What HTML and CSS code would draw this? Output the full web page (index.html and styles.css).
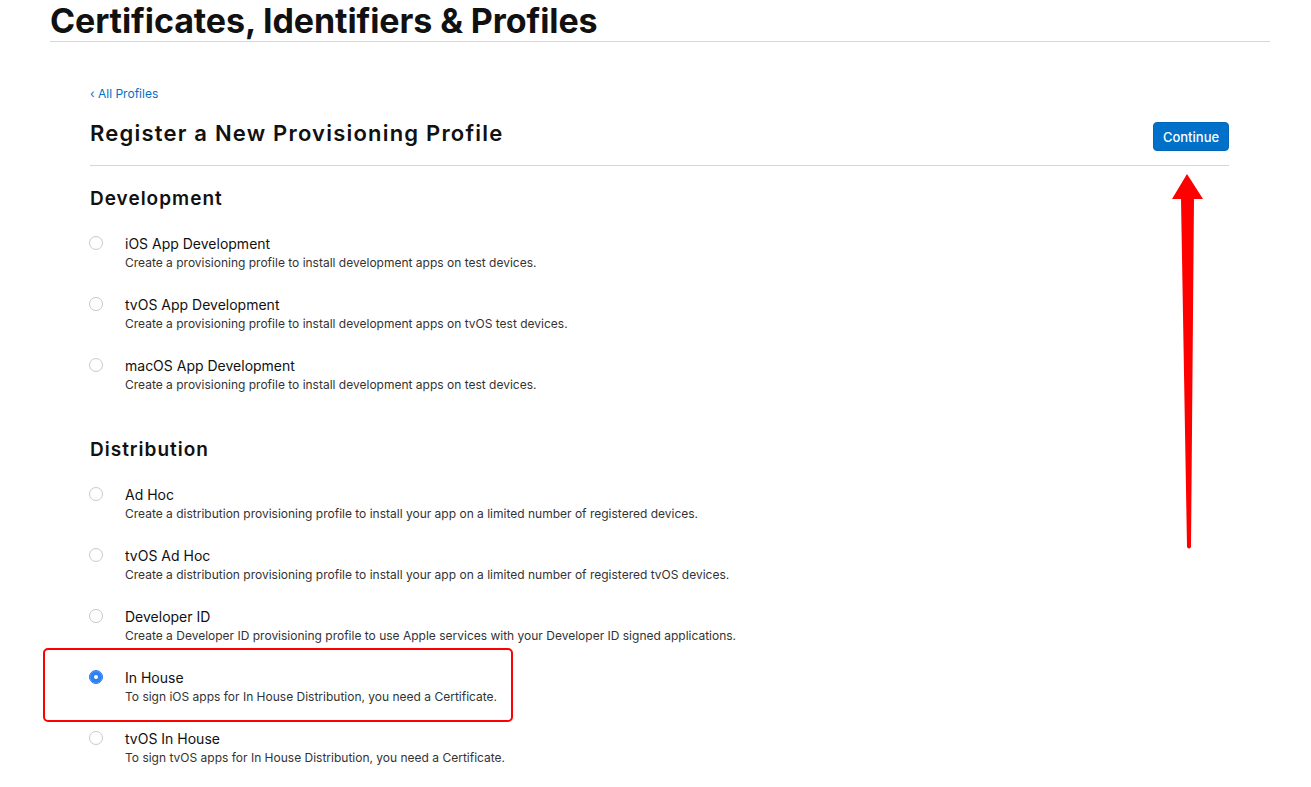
FILE: index.html
```html
<!DOCTYPE html>
<html lang="en">
<head>
    <meta charset="UTF-8">
    <title>Register a New Provisioning Profile</title>
    <link rel="stylesheet" href="styles.css">
</head>
<body>

    <!-- Page header -->
    <header class="page-header">
        <h1>Certificates, Identifiers &amp; Profiles</h1>
    </header>

    <main class="content">
        <a class="back-link" href="#">&lsaquo; All Profiles</a>

        <div class="title-row">
            <h2>Register a New Provisioning Profile</h2>
            <button class="btn-continue">Continue</button>
        </div>

        <!-- Development -->
        <section class="group">
            <h3>Development</h3>
            <div class="option">
                <span class="radio"></span>
                <div class="option-text">
                    <div class="option-title">iOS App Development</div>
                    <div class="option-desc">Create a provisioning profile to install development apps on test devices.</div>
                </div>
            </div>
            <div class="option">
                <span class="radio"></span>
                <div class="option-text">
                    <div class="option-title">tvOS App Development</div>
                    <div class="option-desc">Create a provisioning profile to install development apps on tvOS test devices.</div>
                </div>
            </div>
            <div class="option">
                <span class="radio"></span>
                <div class="option-text">
                    <div class="option-title">macOS App Development</div>
                    <div class="option-desc">Create a provisioning profile to install development apps on test devices.</div>
                </div>
            </div>
        </section>

        <!-- Distribution -->
        <section class="group group-dist">
            <h3>Distribution</h3>
            <div class="option">
                <span class="radio"></span>
                <div class="option-text">
                    <div class="option-title">Ad Hoc</div>
                    <div class="option-desc">Create a distribution provisioning profile to install your app on a limited number of registered devices.</div>
                </div>
            </div>
            <div class="option">
                <span class="radio"></span>
                <div class="option-text">
                    <div class="option-title">tvOS Ad Hoc</div>
                    <div class="option-desc">Create a distribution provisioning profile to install your app on a limited number of registered tvOS devices.</div>
                </div>
            </div>
            <div class="option">
                <span class="radio"></span>
                <div class="option-text">
                    <div class="option-title">Developer ID</div>
                    <div class="option-desc">Create a Developer ID provisioning profile to use Apple services with your Developer ID signed applications.</div>
                </div>
            </div>
            <div class="option option-marked">
                <span class="radio checked"></span>
                <div class="option-text">
                    <div class="option-title">In House</div>
                    <div class="option-desc">To sign iOS apps for In House Distribution, you need a Certificate.</div>
                </div>
                <!-- annotation box -->
                <span class="highlight"></span>
            </div>
            <div class="option">
                <span class="radio"></span>
                <div class="option-text">
                    <div class="option-title">tvOS In House</div>
                    <div class="option-desc">To sign tvOS apps for In House Distribution, you need a Certificate.</div>
                </div>
            </div>
        </section>
    </main>

    <!-- annotation arrow -->
    <svg class="arrow" width="40" height="382" viewBox="0 0 40 382">
        <path d="M19 4 L35 29 L26 29 L23 377 Q21 380 19 377 L13 29 L4 29 Z" fill="#ff0000"/>
    </svg>

</body>
</html>
```

FILE: styles.css
```css
body, html {
    margin: 0;
    padding: 0;
    background: #fff;
    color: #1d1d1f;
    font-family: Inter, "Noto Sans", sans-serif;
}
/* Header */
.page-header {
    margin: 0 41px 0 50px;
    border-bottom: 1px solid #d6d6d6;
}
.page-header h1 {
    margin: 0;
    font-size: 34px;
    line-height: 41px;
    font-weight: 700;
    letter-spacing: -0.1px;
    color: #111;
}
/* Main column */
.content {
    margin: 0 82px 0 90px;
    padding-top: 43px;
}
.back-link {
    display: block;
    font-size: 12px;
    line-height: 18px;
    color: #0070c9;
    text-decoration: none;
}
.title-row {
    display: flex;
    justify-content: space-between;
    align-items: flex-start;
    margin-top: 16px;
    padding-bottom: 14px;
    border-bottom: 1px solid #d6d6d6;
}
.title-row h2 {
    margin: 0;
    font-size: 22px;
    line-height: 28px;
    font-weight: 600;
    letter-spacing: 1.2px;
    color: #111;
}
.btn-continue {
    margin-top: 3px;
    height: 29px;
    width: 76px;
    padding: 0;
    background-color: #0070c9;
    color: #fff;
    border: 1px solid #0066b8;
    border-radius: 4px;
    font-family: inherit;
    font-size: 13px;
    font-weight: 500;
    cursor: pointer;
}
/* Groups */
.group {
    margin-top: 21px;
}
.group-dist {
    margin-top: 44px;
}
.group h3 {
    margin: 0 0 24px 0;
    font-size: 19px;
    line-height: 24px;
    font-weight: 600;
    letter-spacing: 1px;
    color: #111;
}
.option {
    position: relative;
    display: flex;
    gap: 22px;
    margin-bottom: 24px;
}
.radio {
    flex: none;
    box-sizing: border-box;
    width: 14px;
    height: 14px;
    margin: 1px 0 0 -1px;
    border: 1px solid #c9c9c9;
    border-radius: 50%;
    background: #fff;
}
.radio.checked {
    border-color: #2f80f5;
    background: #2f80f5;
    box-shadow: inset 0 0 0 4px #2f80f5, inset 0 0 0 7px #fff;
}
.option-title {
    font-size: 14px;
    line-height: 18px;
    color: #111;
}
.option-desc {
    margin-top: 1px;
    font-size: 12px;
    line-height: 18px;
    color: #333;
}
/* Annotations */
.highlight {
    position: absolute;
    left: -47px;
    top: -21px;
    width: 470px;
    height: 74px;
    box-sizing: border-box;
    border: 2px solid #ff0000;
    border-radius: 5px;
}
.arrow {
    position: absolute;
    left: 1168px;
    top: 170px;
}
```
